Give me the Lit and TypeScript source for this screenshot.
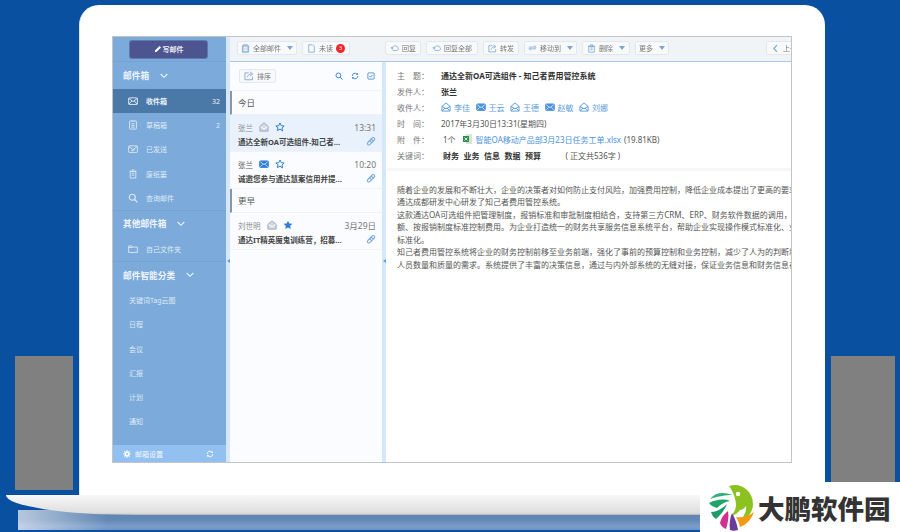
import {LitElement, html, css, svg} from "lit";
import {customElement} from "lit/decorators.js";

const icon = (body: unknown, cls = "") =>
  html`<svg class="ic ${cls}" viewBox="0 0 16 16" fill="none" stroke="currentColor" stroke-width="1.4">${body}</svg>`;

const I = {
  mail: svg`<rect x="1" y="3" width="14" height="10.5" rx="1"/><path d="M1.5 4l6.5 5 6.5-5M1.5 13l4.5-5M14.5 13L10 8"/>`,
  mailFill: svg`<rect x="1" y="3" width="14" height="10.5" rx="1.5" fill="currentColor"/><path d="M2 4.5l6 4.5 6-4.5M2 12.5l4-4M14 12.5l-4-4" stroke="#fff" stroke-width="1.1"/>`,
  open: svg`<path d="M1.5 7L8 1.5 14.5 7v7.5h-13zM1.5 7L8 11l6.5-4M2 14l4.5-4.5M14 14L9.5 9.5"/>`,
  openGrey: svg`<path d="M1.5 7L8 1.5 14.5 7v7.5h-13z" fill="#d5dae2"/><path d="M1.5 7L8 11l6.5-4" stroke="#fff"/><path d="M1.5 7L8 1.5 14.5 7v7.5h-13z"/>`,
  star: svg`<path d="M8 1.5l2 4.4 4.7.5-3.5 3.2 1 4.7L8 11.4l-4.2 2.4 1-4.7L1.3 6.4 6 5.9z" stroke-linejoin="round" stroke-width="1.6"/>`,
  starFill: svg`<path d="M8 1l2.1 4.6 5 .5-3.7 3.4 1 4.9L8 12l-4.4 2.4 1-4.9L.9 6.1l5-.5z" fill="currentColor" stroke="none"/>`,
  clip: svg`<path d="M2.5 10.5l7-7c1.5-1.5 3.2-1.2 4 0s.6 2.4-.6 3.6l-6.4 6.4c-1.2 1.2-2.8 1-3.6.2s-.8-2.2.3-3.4L9 4.5M5.5 7L9 10.5M8 4.5L11.5 8" stroke-width="1.8"/>`,
  search: svg`<circle cx="6.8" cy="6.8" r="4.8" stroke-width="1.8"/><path d="M10.5 10.5L15 15" stroke-width="2"/>`,
  sync: svg`<path d="M2.5 8A5.5 5.5 0 0 1 12 4.2M13.5 8A5.5 5.5 0 0 1 4 11.8" stroke-width="1.8"/><path d="M13.8 1.8v4h-4zM2.2 14.2v-4h4z" fill="currentColor" stroke="none"/>`,
  check: svg`<rect x="1.8" y="1.8" width="12.4" height="12.4" rx="1" stroke-width="1.5"/><path d="M4.8 8l2.3 2.4 4.2-4.8" stroke-width="1.6"/>`,
  share: svg`<path d="M13.5 9v5h-12V3h6"/><path d="M5.5 10c.6-3.4 3-5.3 6.5-5.3M9.8 1.5L14 4.8l-4.2 3"/>`,
  doc: svg`<path d="M3 1.5h7l3 3v10H3z"/>`,
  docFill: svg`<path d="M2.5 3h2V1.5h7V3h2v11.5h-11z" fill="currentColor" fill-opacity=".5"/><path d="M5 6.5h6M5 9h6M5 11.5h6" stroke="#fff"/>`,
  reply: svg`<path d="M5 11.5H12a3 3 0 0 0 2.5-4.5 5 5 0 0 0-9-1.5"/><path d="M1 6.5l4-2v6z" fill="currentColor" stroke="none"/>`,
  move: svg`<path d="M1.5 5.5h13M14 8.5H1.5M11 2.5l3 3M5 11.5l-3-3"/>`,
  trash: svg`<path d="M3 4h10v10.5H3zM1.5 4h13M6 4V1.5h4V4M6 7h4M6 10h4"/>`,
  draft: svg`<rect x="2.5" y="1.5" width="11" height="13" rx="1"/><path d="M5.5 6h5M5.5 9h5M5.5 11.5h5M6 1v2M10 1v2"/>`,
  sent: svg`<rect x="1" y="3" width="14" height="10.5" rx="1"/><path d="M1.5 4l6.5 5 6.5-5M5 11l2-1 1 1.5 3-3"/>`,
  bin: svg`<path d="M3.5 4h9v10.5h-9zM2.5 3.5h11M6 1.5h4M6 7h4M6 10h4"/>`,
  folder: svg`<path d="M1 3h5l1 2h8v8.5H1zM1 5.5h6"/>`,
  pencil: svg`<path d="M1.5 14.5l1-4L11 2l3 3-8.5 8.5z" fill="currentColor" stroke="none"/>`,
  gear: svg`<circle cx="8" cy="8" r="3.5" stroke-width="3"/><path d="M8 .5v3M8 12.5v3M.5 8h3M12.5 8h3M2.7 2.7l2 2M11.3 11.3l2 2M13.3 2.7l-2 2M4.7 11.3l-2 2" stroke-width="2.4"/>`,
  back: svg`<path d="M10.5 2L5 8l5.5 6" stroke-width="2"/>`,
};

const chevron = html`<svg class="chev" viewBox="0 0 12 8" fill="none" stroke="currentColor" stroke-width="1.6"><path d="M1 1l5 5 5-5"/></svg>`;
const caret = html`<i class="caret"></i>`;

const mailRows = [
  {ic: I.mail, label: "收件箱", count: "32", active: true},
  {ic: I.draft, label: "草稿箱", count: "2"},
  {ic: I.sent, label: "已发送"},
  {ic: I.bin, label: "废纸篓"},
  {ic: I.search, label: "查询邮件"},
];
const smartRows = ["关键词Tag云图", "日程", "会议", "汇报", "计划", "通知"];
const recipients = [
  {n: "李佳", ic: I.open},
  {n: "王云", ic: I.mailFill},
  {n: "王德", ic: I.open},
  {n: "赵敏", ic: I.mailFill},
  {n: "刘娜", ic: I.open},
];
const bodyLines = [
  "随着企业的发展和不断壮大，企业的决策者对如何防止支付风险，加强费用控制，降低企业成本提出了更高的要求",
  "通达成都研发中心研发了知己者费用管控系统。",
  "这款通达OA可选组件把管理制度，报销标准和审批制度相结合，支持第三方CRM、ERP、财务软件数据的调用，",
  "额、按报销制度标准控制费用。为企业打造统一的财务共享服务信息系统平台，帮助企业实现操作模式标准化、业",
  "标准化。",
  "知己者费用管控系统将企业的财务控制前移至业务前端，强化了事前的预算控制和业务控制，减少了人为的判断和",
  "人员数量和质量的需求。系统提供了丰富的决策信息，通过与内外部系统的无缝对接，保证业务信息和财务信息在",
];

@customElement("app-root")
export class AppRoot extends LitElement {
  static styles = css`
    :host {
      display: block;
      position: relative;
      width: 900px;
      height: 532px;
      overflow: hidden;
      background: #0a50a0;
      font-family: "Noto Sans", "Noto Sans CJK SC", sans-serif;
      font-size: 8px;
      color: #555;
    }
    .ic { width: 10px; height: 10px; flex: none; display: block; }
    .top { display: flex; gap: 6px; padding: 5px 5px 0 15px; height: 495px; box-sizing: border-box; }
    .box { background: #808080; width: 58px; height: 134px; align-self: flex-end; margin-bottom: 5px; }
    .box.right { width: 64px; height: 126px; margin-bottom: 13px; }
    .shell {
      width: 746px;
      height: 490px;
      box-sizing: border-box;
      background: #fff;
      border-radius: 20px 20px 0 0;
      padding: 31px 33px 0;
      border-left: 1px solid #dbe6f2;
    }
    .base {
      position: relative;
      margin-left: 6px;
      width: 888px;
      height: 20px;
      background: linear-gradient(#f8f8f8, #ebebeb 45%, #dedede 90%, #b5b5b5);
      border-bottom-left-radius: 130px 20px;
      border-bottom-right-radius: 130px 20px;
    }
    .shine {
      margin: -5px 0 0 18px;
      height: 20px;
      background:
        linear-gradient(90deg, rgba(255,255,255,.55), rgba(255,255,255,0) 90px),
        linear-gradient(#5f86b4 25%, #6288b6 50%, #7c9cc8 80%, #6f94c4);
    }
    .window {
      width: 680px;
      height: 427px;
      box-sizing: border-box;
      border: 1px solid #c4c4c4;
      margin-left: -1px;
      display: grid;
      grid-template-columns: 113px 4px 152px 4px 1fr;
      grid-template-rows: 25px 1fr;
      filter: blur(.4px);
      overflow: hidden;
    }
    .side { grid-row: 1 / 3; background: #7caadb; color: #e4eef8; display: flex; flex-direction: column; font-size: 7px; }
    .compose { height: 24px; flex: none; display: flex; justify-content: center; align-items: center; border-bottom: 1px solid #74a2d2; padding-right: 2px; }
    .compose button {
      all: unset; width: 77px; height: 17px; border-radius: 2px; background: #4d5590; color: #e8e8f2;
      font-size: 7px; font-weight: 700; display: flex; align-items: center; justify-content: center; gap: 1px;
      box-shadow: 0 0 0 1px #5f79ad;
    }
    .compose .ic { width: 8px; height: 8px; color: #fff; }
    .sec { height: 27px; flex: none; display: flex; align-items: center; gap: 11px; padding-left: 10px; font-size: 8.7px; font-weight: 700; color: #eef4fb; box-sizing: border-box; }
    .sec.line { border-top: 1px solid #74a2d2; }
    .chev { width: 8px; height: 6px; }
    .row { height: 24.2px; flex: none; display: flex; align-items: center; padding: 0 6px 0 15px; box-sizing: border-box; gap: 8px; color: #dfeaf6; }
    .row.on { background: #4a79a8; color: #eef3f9; font-weight: 700; }
    .row .ic { width: 10px; height: 10px; }
    .row .n { margin-left: auto; font-weight: 400; }
    .row.plain { padding-left: 16px; }
    .foot { margin-top: auto; height: 17px; flex: none; background: #92c0f0; color: #f3f8fd; display: flex; align-items: center; padding: 0 12px 0 10px; gap: 4px; }
    .foot .ic { width: 8px; height: 8px; color: #fff; }
    .foot .ic:last-child { margin-left: auto; }
    .split { background: #d6e7fb; display: flex; justify-content: center; align-items: flex-start; }
    .split i { width: 0; height: 0; border: 2.5px solid transparent; border-right: 3px solid #5aa2e8; border-left: 0; }
    .split.a { grid-row: 1 / 3; padding-top: 222px; }
    .split.b { padding-top: 197px; }
    .tools {
      grid-column: 3 / 6; background: #f1f4f7; border-bottom: 1px solid #a9c7ea; display: flex; align-items: center;
      padding: 0 0 2px 7px; gap: 5px; white-space: nowrap; overflow: hidden; font-size: 7px;
    }
    .btn {
      height: 14px; box-sizing: border-box; display: flex; align-items: center; gap: 3px; padding: 0 4px;
      background: #f7f9fb; border: 1px solid #e4e8ed; border-radius: 2px; color: #777; flex: none;
    }
    .btn.dd { padding: 0 3px; }
    .btn.wide { padding: 0 5px; }
    .btn.dd.wide { padding: 0 4px; }
    .btn .ic { width: 9px; height: 9px; color: #7ba4cf; }
    .caret { width: 0; height: 0; border: 3px solid transparent; border-top: 4px solid #7ba4d6; border-bottom: 0; margin-left: 3px; }
    .badge { width: 9px; height: 9px; border-radius: 50%; background: #f4252b; color: #fff; font-size: 6px; line-height: 9px; text-align: center; }
    .gap-l { margin-left: 30px; }
    .far { margin-left: auto; margin-right: -22px; padding-right: 8px; }
    .list { background: #fbfcff; display: flex; flex-direction: column; }
    .list-top { height: 28px; flex: none; display: flex; align-items: center; padding: 0 7px 0 9px; gap: 8px; border-bottom: 1px solid #f0f2f6; }
    .list-top .ic { width: 8px; height: 8px; color: #2f80d0; }
    .list-top .btn { margin-right: auto; gap: 3px; padding: 0 4px; font-size: 7px; }
    .list-top .btn .ic { width: 10px; height: 10px; color: #7ba4cf; }
    .day { height: 24px; flex: none; box-sizing: border-box; display: flex; align-items: center; padding: 0 0 1px 6px; font-size: 8.5px; color: #555; border-left: 2px solid #8a96a4; border-bottom: 1px solid #eef1f6; }
    .mail { height: 37px; flex: none; box-sizing: border-box; padding: 5px 6px 0 8px; border-bottom: 1px solid #f0f2f6; }
    .mail.sel { background: #e9f1fd; }
    .meta { display: flex; align-items: center; gap: 6px; height: 14px; color: #8a8a8a; font-size: 7.5px; }
    .meta.dark { color: #555; }
    .meta .time { margin-left: auto; font-size: 8.5px; color: #777; }
    .meta .ic { width: 10px; height: 10px; color: #2f7fd6; }
    .meta .ic.grey { color: #aeb7c2; }
    .subj { display: flex; align-items: center; justify-content: space-between; height: 16px; margin-top: -1px; font-weight: 700; color: #444; font-size: 7.5px; white-space: nowrap; }
    .subj .ic { width: 10px; height: 10px; color: #7ba9dc; }
    .detail { background: #fff; min-width: 0; }
    .head { padding: 5px 0 0 11px; height: 109px; box-sizing: border-box; border-bottom: 3px solid #f6f7f8; }
    .f { display: flex; align-items: center; height: 16px; white-space: nowrap; color: #555; }
    .f > b:first-child { font-weight: 400; width: 44px; flex: none; color: #777; }
    .f strong { color: #333; font-weight: 700; }
    .who { display: flex; align-items: center; gap: 3px; margin-right: 5.5px; color: #5a9bdc; }
    .who .ic { color: #4a92dc; }
    .tag { font-weight: 700; color: #333; margin-right: 4.5px; }
    .link { color: #4a92dc; margin-right: 3px; }
    .lead { margin-left: 2px; }
    .xls { width: 9px; height: 10px; margin: 0 4px 0 7px; flex: none; }
    .count { margin-left: 20px; }
    .body { padding: 12.5px 0 0 11px; color: #555; white-space: nowrap; overflow: hidden; }
    .body div { height: 12.6px; line-height: 12.6px; }
    .brand {
      position: absolute; right: 0; bottom: 0; width: 200px; height: 37px; background: #fff;
      display: flex; align-items: center; padding: 0 0 12px 58px; box-sizing: border-box;
      font-size: 26.5px; font-weight: 900; color: #333; white-space: nowrap;
    }
    .brand::before { content: ""; position: absolute; right: 0; top: -13px; width: 76px; height: 13px; background: #fff; }
    .mark { position: absolute; left: 8px; top: -12px; width: 46px; height: 48px; }
  `;

  render() {
    return html`
      <div class="top">
        <div class="box"></div>
        <div class="shell">
          <div class="window">
            ${this._renderSide()}
            <div class="split a"><i></i></div>
            ${this._renderTools()}
            ${this._renderList()}
            <div class="split b"><i></i></div>
            ${this._renderDetail()}
          </div>
        </div>
        <div class="box right"></div>
      </div>
      <div class="base"></div>
      <div class="shine"></div>
      <div class="brand">
        <svg class="mark" viewBox="0 0 46 48">
          <path d="M21 3C33 -1 45 8 45 21c0 9-7 16-15 18 5-4 9-10 8-16-1 2-4 4-6 4-2 3-5 5-9 6 3-3 5-7 5-11 0-6-3-14-7-19z" fill="#8cc21f"/>
          <circle cx="30" cy="11" r="2.2" fill="#fff"/>
          <path d="M2 16C8 9 16 9 24 12c-6 0-13 1-22 4z" fill="#2fae7a"/>
          <path d="M1 20c6-3 15-5 21-2-6 1-10 4-13 7-3-1-6-2-8-5z" fill="#1fa56c"/>
          <path d="M3 29c5 0 11-3 16-8-2 5-6 11-11 15-3-2-4-4-5-7z" fill="#1f9c68"/>
          <path d="M12 40c1-5 4-9 8-12 1 6 0 12-2 18-3-1-5-3-6-6z" fill="#d3308c"/>
          <path d="M22 47c-1-6 0-12 2-17 3 5 5 11 6 17-3 1-6 1-8 0z" fill="#6a3a9c"/>
          <path d="M28 34c7 1 13-1 18-5-3 8-8 13-14 15-1-4-2-7-4-10z" fill="#f39a12"/>
        </svg>
        大鹏软件园
      </div>
    `;
  }

  _renderSide() {
    return html`
      <aside class="side">
        <div class="compose"><button>${icon(I.pencil)}写邮件</button></div>
        <div class="sec">邮件箱 ${chevron}</div>
        ${mailRows.map(
          (r) => html`<div class="row ${r.active ? "on" : ""}">${icon(r.ic)}<span>${r.label}</span>${r.count ? html`<span class="n">${r.count}</span>` : ""}</div>`
        )}
        <div class="sec line">其他邮件箱 ${chevron}</div>
        <div class="row">${icon(I.folder)}<span>自己文件夹</span></div>
        <div class="sec line">邮件智能分类 ${chevron}</div>
        ${smartRows.map((r) => html`<div class="row plain">${r}</div>`)}
        <div class="foot">${icon(I.gear)}<span>邮箱设置</span>${icon(I.sync)}</div>
      </aside>
    `;
  }

  _renderTools() {
    return html`
      <div class="tools">
        <div class="btn dd">${icon(I.docFill)}全部邮件${caret}</div>
        <div class="btn">${icon(I.doc)}未读<span class="badge">3</span></div>
        <div class="btn gap-l">${icon(I.reply)}回复</div>
        <div class="btn wide">${icon(I.reply)}回复全部</div>
        <div class="btn">${icon(I.share)}转发</div>
        <div class="btn dd">${icon(I.move)}移动到${caret}</div>
        <div class="btn dd wide">${icon(I.trash)}删除${caret}</div>
        <div class="btn dd">更多${caret}</div>
        <div class="btn far">${icon(I.back)}上一封</div>
      </div>
    `;
  }

  _renderList() {
    return html`
      <section class="list">
        <div class="list-top">
          <div class="btn">${icon(I.share)}排序</div>
          ${icon(I.search)}${icon(I.sync)}${icon(I.check)}
        </div>
        <div class="day">今日</div>
        ${this._renderMail("张兰", I.openGrey, "grey", I.star, "13:31", "通达全新OA可选组件-知己者…", true, false)}
        ${this._renderMail("张兰", I.mailFill, "", I.star, "10:20", "诚邀您参与通达慧案信用并提…", false, true)}
        <div class="day">更早</div>
        ${this._renderMail("刘世明", I.openGrey, "grey", I.starFill, "3月29日", "通达IT精英魔鬼训练营，招募…", false, false)}
      </section>
    `;
  }

  _renderMail(name: string, state: unknown, cls: string, star: unknown, time: string, subj: string, sel: boolean, dark: boolean) {
    return html`
      <div class="mail ${sel ? "sel" : ""}">
        <div class="meta ${dark ? "dark" : ""}"><span>${name}</span>${icon(state, cls)}${icon(star)}<span class="time">${time}</span></div>
        <div class="subj"><span>${subj}</span>${icon(I.clip)}</div>
      </div>
    `;
  }

  _renderDetail() {
    return html`
      <section class="detail">
        <div class="head">
          <div class="f"><b>主　题：</b><strong>通达全新OA可选组件 - 知己者费用管控系统</strong></div>
          <div class="f"><b>发件人：</b><strong>张兰</strong></div>
          <div class="f"><b>收件人：</b>${recipients.map((r) => html`<span class="who">${icon(r.ic)}<span>${r.n}</span></span>`)}</div>
          <div class="f"><b>时　间：</b>2017年3月30日13:31(星期四)</div>
          <div class="f"><b>附　件：</b><span class="lead">1个</span><svg class="xls" viewBox="0 0 9 10"><rect x="3" y="0" width="6" height="10" fill="#d8e4d8"/><rect x="0" y="2" width="6" height="6" fill="#2e8b50"/><path d="M1.5 3.5l3 3M4.5 3.5l-3 3" stroke="#fff" stroke-width=".8"/></svg><span class="link">智能OA移动产品部3月23日任务工单.xlsx</span><span>(19.81KB)</span></div>
          <div class="f"><b>关键词：</b><span class="lead"></span>${["财务", "业务", "信息", "数据", "预算"].map((t) => html`<span class="tag">${t}</span>`)}<span class="count">( 正文共536字 )</span></div>
        </div>
        <div class="body">${bodyLines.map((l) => html`<div>${l}</div>`)}</div>
      </section>
    `;
  }
}
